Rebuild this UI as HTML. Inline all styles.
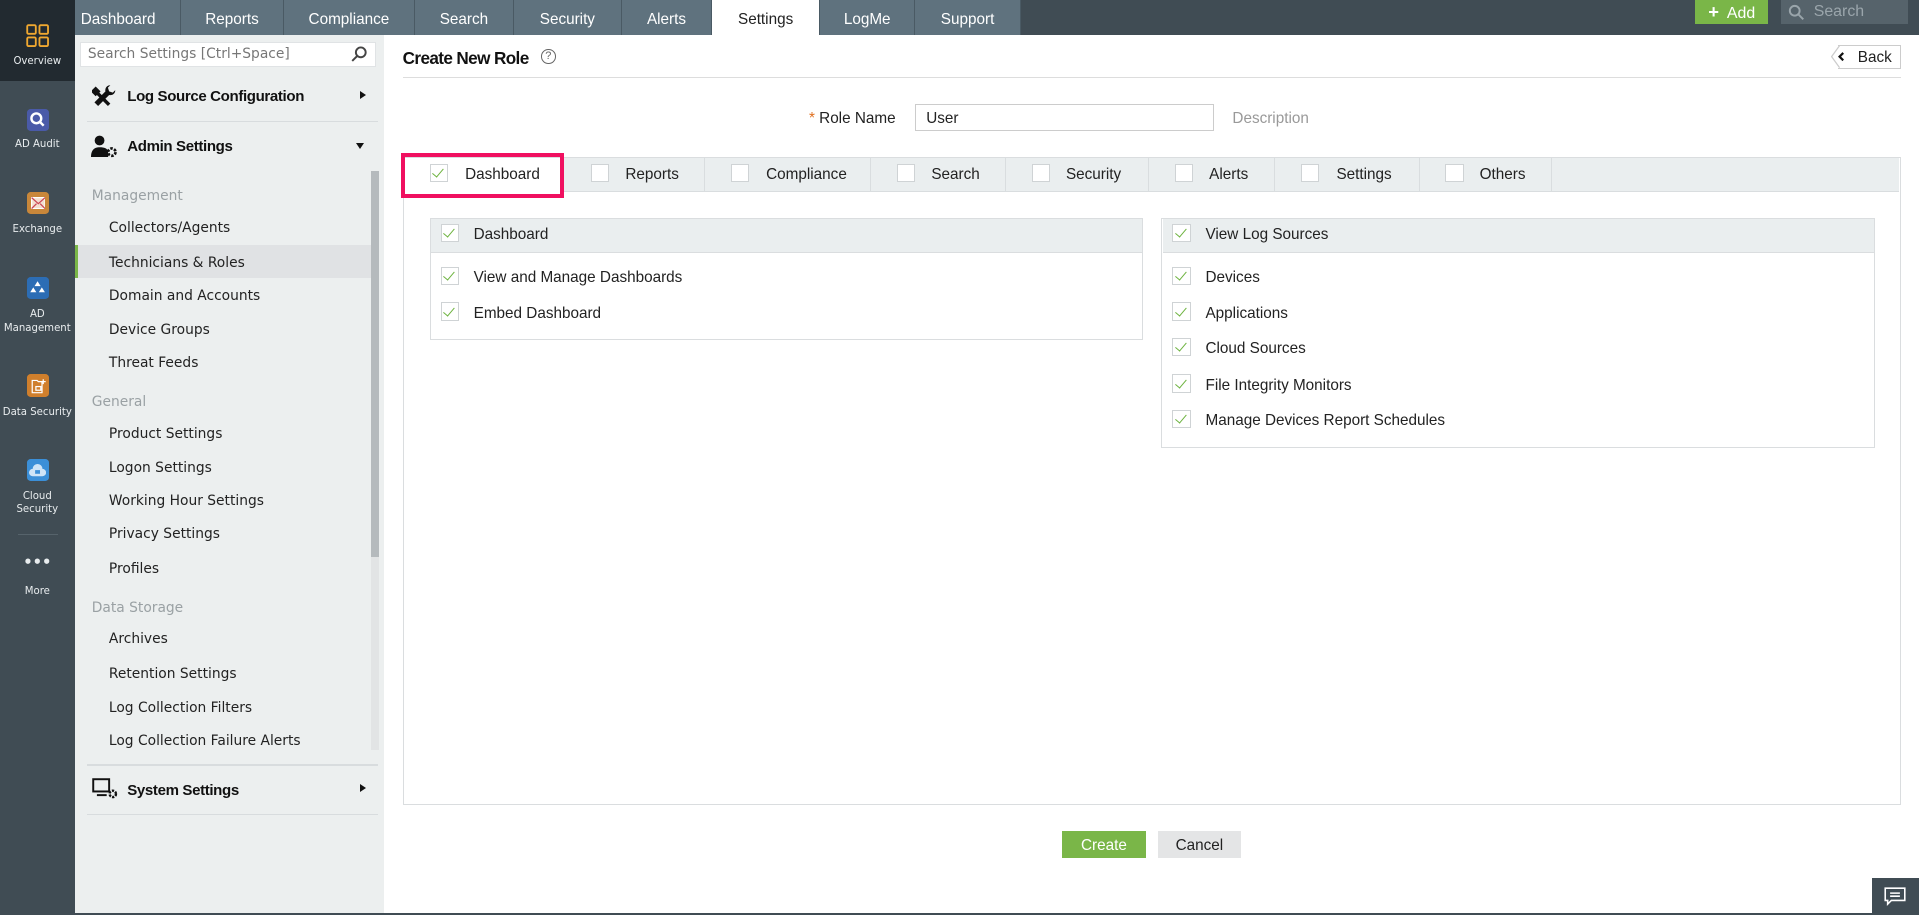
<!DOCTYPE html>
<html><head><meta charset="utf-8">
<style>
*{box-sizing:border-box;margin:0;padding:0}
html,body{width:1919px;height:916px;overflow:hidden;background:#fff}
#root{zoom:1.22385;width:1568px;height:748px;position:relative;font-family:"Liberation Sans",sans-serif;color:#222;overflow:hidden}
.abs{position:absolute}
#rail{left:0;top:0;width:61px;height:748px;background:#404c54}
#ov{left:0;top:0;width:61px;height:66px;background:#222a30}
.rl{position:absolute;width:61px;text-align:center;color:#e8ecee;font-family:"DejaVu Sans",sans-serif;font-size:8.3px;line-height:11px}
.ri{position:absolute;left:22px;width:18px;height:18px;border-radius:3px}
#top{left:61px;top:0;width:1507px;height:29px;background:#404c54}
.tab{position:absolute;top:0;height:29px;background:#5f727e;color:#fff;font-size:12.5px;line-height:32px;text-align:center;border-right:1px solid #4a5a64}
.tab.act{background:#fff;color:#222}
#side{left:61px;top:29px;width:253px;height:719px;background:#ecefef}
.si{position:absolute;left:28px;font-family:"DejaVu Sans",sans-serif;font-size:11.3px;color:#222}
.sh{position:absolute;left:14px;font-family:"DejaVu Sans",sans-serif;font-size:11.3px;color:#9aa1a4}
.sb{position:absolute;left:43px;font-size:12.3px;font-weight:bold;color:#111;letter-spacing:-0.3px}
.hl{position:absolute;left:10px;width:238px;height:1px;background:#d8dcde}
.cb{position:absolute;width:15px;height:15px;border:1px solid #cfd3d5;background:#fff}
.cb.on::after{content:"";position:absolute;left:4px;top:1px;width:4px;height:8px;border:solid #6db33f;border-width:0 1.5px 1.5px 0;transform:rotate(40deg)}
.t12{font-size:12.5px}
.ptab{position:absolute;top:129px;height:28px;border-right:1px solid #d9dddf;font-size:12.5px;line-height:28px}
</style></head><body><div id="root">

<div id="rail" class="abs"></div>
<div id="ov" class="abs"></div>
<svg class="abs" style="left:21px;top:20px" width="19" height="19" viewBox="0 0 19 19" fill="none" stroke="#f0a830" stroke-width="1.5"><rect x="1" y="1" width="7" height="7" rx="1"/><rect x="11" y="1" width="7" height="7" rx="1"/><rect x="1" y="11" width="7" height="7" rx="1"/><rect x="11" y="11" width="7" height="7" rx="1"/></svg>
<div class="rl" style="top:45px">Overview</div>
<div class="ri" style="top:89px;background:#4a5aa8"></div><svg class="abs" style="left:24px;top:91px" width="14" height="14" viewBox="0 0 14 14"><circle cx="6" cy="6" r="4" fill="none" stroke="#fff" stroke-width="2"/><path d="M9 9l3 3" stroke="#fff" stroke-width="2"/></svg>
<div class="rl" style="top:113px">AD Audit</div>
<div class="ri" style="top:157px;background:#c9873a"></div><svg class="abs" style="left:25px;top:161px" width="12" height="10" viewBox="0 0 12 10"><rect x="0.5" y="0.5" width="11" height="9" fill="#f3e0d0" stroke="#fff"/><path d="M0.5 0.5l5.5 5 5.5-5M0.5 9.5l4-4M11.5 9.5l-4-4" stroke="#c45" fill="none"/></svg>
<div class="rl" style="top:182px">Exchange</div>
<div class="ri" style="top:226px;background:#2c6db5"></div><svg class="abs" style="left:24px;top:229px" width="14" height="12" viewBox="0 0 14 12" fill="#fff"><path d="M7 1l2.5 4h-5zM3.5 6l2.5 4H1zM10.5 6l2.5 4H8z"/></svg>
<div class="rl" style="top:252px">AD<br>Management</div>
<div class="ri" style="top:306px;background:#d07f2c"></div><svg class="abs" style="left:25px;top:309px" width="13" height="13" viewBox="0 0 13 13" fill="none" stroke="#fff" stroke-width="1"><path d="M1 2h4l1 1h3v9H1z"/><rect x="4" y="7" width="4" height="3"/><path d="M10 1v4M8 3h4"/></svg>
<div class="rl" style="top:332px">Data Security</div>
<div class="ri" style="top:375px;background:#3b8fd8"></div><svg class="abs" style="left:24px;top:379px" width="14" height="11" viewBox="0 0 14 11"><path d="M3 10a3 3 0 010-6 4 4 0 018 0 3 3 0 010 6z" fill="#cfe4f7"/><rect x="5" y="5" width="4" height="3" fill="#3b8fd8"/></svg>
<div class="rl" style="top:400px">Cloud<br>Security</div>
<div class="abs" style="left:15px;top:436px;width:32px;height:1px;background:#56636b"></div>
<div class="rl" style="top:454px;font-size:12px;font-weight:bold">•••</div>
<div class="rl" style="top:478px">More</div>

<div id="top" class="abs"></div>
<div class="tab" style="left:61px;width:87px;text-align:left;padding-left:5px">Dashboard</div>
<div class="tab" style="left:148px;width:84px">Reports</div>
<div class="tab" style="left:232px;width:107px">Compliance</div>
<div class="tab" style="left:339px;width:81px">Search</div>
<div class="tab" style="left:420px;width:88px">Security</div>
<div class="tab" style="left:508px;width:74px">Alerts</div>
<div class="tab act" style="left:582px;width:88px">Settings</div>
<div class="tab" style="left:670px;width:78px">LogMe</div>
<div class="tab" style="left:748px;width:86px">Support</div>
<div class="abs" style="left:1385px;top:0;width:60px;height:20px;background:#7ab648;color:#fff;font-size:13px;line-height:20px;text-align:center"><b style="font-size:15px">+</b>&nbsp; Add</div>
<div class="abs" style="left:1455px;top:0;width:104px;height:20px;background:#56636b;color:#9aa5ab;font-size:13px;line-height:19px;padding-left:27px">Search</div>
<svg class="abs" style="left:1461px;top:3px" width="14" height="14" viewBox="0 0 14 14" fill="none" stroke="#9aa5ab" stroke-width="1.6"><circle cx="5.5" cy="5.5" r="4"/><path d="M8.5 8.5l4 4"/></svg>

<div id="side" class="abs">
 <div class="abs" style="left:4px;top:5px;width:242px;height:21px;background:#fff;border:1px solid #e0e3e5;font-family:'DejaVu Sans',sans-serif;font-size:11.3px;color:#777;padding:3px 6px">Search Settings [Ctrl+Space]</div>
 <svg class="abs" style="left:226px;top:8px" width="14" height="14" viewBox="0 0 14 14" fill="none" stroke="#444" stroke-width="1.6"><circle cx="8" cy="6" r="4"/><path d="M5 9l-4 4"/></svg>
 <svg class="abs" style="left:14px;top:40px" width="20" height="20" viewBox="0 0 20 20" fill="#111"><path d="M3 2l4 4-1 1 9 9-2 2-9-9-1 1-4-4z"/><path d="M15 1a4 4 0 00-4 5L2 15l3 3 9-9a4 4 0 005-4l-2 2-3-1-1-3z"/></svg>
 <div class="sb" style="top:43px">Log Source Configuration</div>
 <div class="abs" style="left:233px;top:45px;border-left:5px solid #111;border-top:4px solid transparent;border-bottom:4px solid transparent"></div>
 <div class="hl" style="top:70px"></div>
 <svg class="abs" style="left:13px;top:81px" width="22" height="19" viewBox="0 0 22 19" fill="#111"><circle cx="7" cy="4.5" r="4"/><path d="M0 18c0-6 3-8 7-8s6 1 7 3v5z"/><circle cx="17" cy="14" r="3" fill="none" stroke="#111" stroke-width="2.2" stroke-dasharray="2 1.2"/></svg>
 <div class="sb" style="top:84px">Admin Settings</div>
 <div class="abs" style="left:230px;top:88px;border-top:5px solid #111;border-left:4px solid transparent;border-right:4px solid transparent"></div>
 <div class="abs" style="left:242px;top:111px;width:7px;height:315px;background:#b5babd"></div>
 <div class="abs" style="left:242px;top:426px;width:7px;height:158px;background:#e2e4e5"></div>
 <div class="sh" style="top:125px">Management</div>
 <div class="si" style="top:151px">Collectors/Agents</div>
 <div class="abs" style="left:0;top:171px;width:242px;height:27px;background:#e0e2e4;border-left:3px solid #7ab648"></div>
 <div class="si" style="top:179px">Technicians &amp; Roles</div>
 <div class="si" style="top:206px">Domain and Accounts</div>
 <div class="si" style="top:234px">Device Groups</div>
 <div class="si" style="top:261px">Threat Feeds</div>
 <div class="sh" style="top:293px">General</div>
 <div class="si" style="top:319px">Product Settings</div>
 <div class="si" style="top:347px">Logon Settings</div>
 <div class="si" style="top:374px">Working Hour Settings</div>
 <div class="si" style="top:401px">Privacy Settings</div>
 <div class="si" style="top:429px">Profiles</div>
 <div class="sh" style="top:461px">Data Storage</div>
 <div class="si" style="top:487px">Archives</div>
 <div class="si" style="top:515px">Retention Settings</div>
 <div class="si" style="top:543px">Log Collection Filters</div>
 <div class="si" style="top:570px">Log Collection Failure Alerts</div>
 <div class="hl" style="top:595px;height:2px"></div>
 <svg class="abs" style="left:14px;top:607px" width="22" height="18" viewBox="0 0 22 18" fill="none" stroke="#111" stroke-width="1.6"><rect x="1" y="1" width="13" height="10"/><path d="M4 14h8"/><circle cx="17" cy="13" r="2.6" stroke-width="2" stroke-dasharray="1.8 1"/></svg>
 <div class="sb" style="top:610px">System Settings</div>
 <div class="abs" style="left:233px;top:612px;border-left:5px solid #111;border-top:4px solid transparent;border-bottom:4px solid transparent"></div>
 <div class="hl" style="top:636px"></div>
</div>

<div class="abs" style="left:329px;top:39px;font-size:14px;font-weight:bold;color:#111;letter-spacing:-.5px">Create New Role</div>
<div class="abs" style="left:442px;top:40px;width:12px;height:12px;border:1px solid #666;border-radius:50%;font-size:9px;line-height:10px;text-align:center;color:#666">?</div>
<div class="abs" style="left:329px;top:63px;width:1224px;height:1px;background:#ddd"></div>
<div class="abs" style="left:1502px;top:37px;width:51px;height:19px;border:1px solid #ccc;border-left:none;font-size:12.5px;line-height:20px;padding-left:16px">Back</div>
<svg class="abs" style="left:1496px;top:37px" width="12" height="19" viewBox="0 0 12 19"><path d="M7 0.5L0.5 9.5 7 18.5" fill="#fff" stroke="#ccc"/><path d="M10 6.5l-3 3 3 3" fill="none" stroke="#111" stroke-width="1.8"/></svg>

<div class="abs t12" style="left:661px;top:90px"><span style="color:#e07020">*</span> Role Name</div>
<div class="abs t12" style="left:748px;top:85px;width:244px;height:22px;border:1px solid #ccc;padding:4px 8px">User</div>
<div class="abs t12" style="left:1007px;top:90px;color:#999">Description</div>

<div class="abs" style="left:329px;top:128px;width:1224px;height:530px;border:1px solid #dadddf"></div>
<div class="abs" style="left:330px;top:129px;width:1222px;height:28px;background:#eaeeef;border-bottom:1px solid #d9dddf"></div>
<div class="ptab" style="left:329px;width:131px;background:#fff"></div>
<div class="cb on" style="left:351px;top:134px"></div><div class="abs t12" style="left:380px;top:136px">Dashboard</div>
<div class="abs" style="left:328px;top:125px;width:133px;height:37px;border:4px solid #f01060"></div>
<div class="ptab" style="left:460px;width:116px"></div><div class="cb" style="left:483px;top:134px"></div><div class="abs t12" style="left:511px;top:136px">Reports</div>
<div class="ptab" style="left:576px;width:136px"></div><div class="cb" style="left:597px;top:134px"></div><div class="abs t12" style="left:626px;top:136px">Compliance</div>
<div class="ptab" style="left:712px;width:110px"></div><div class="cb" style="left:733px;top:134px"></div><div class="abs t12" style="left:761px;top:136px">Search</div>
<div class="ptab" style="left:822px;width:117px"></div><div class="cb" style="left:843px;top:134px"></div><div class="abs t12" style="left:871px;top:136px">Security</div>
<div class="ptab" style="left:939px;width:103px"></div><div class="cb" style="left:960px;top:134px"></div><div class="abs t12" style="left:988px;top:136px">Alerts</div>
<div class="ptab" style="left:1042px;width:118px"></div><div class="cb" style="left:1063px;top:134px"></div><div class="abs t12" style="left:1092px;top:136px">Settings</div>
<div class="ptab" style="left:1160px;width:108px"></div><div class="cb" style="left:1181px;top:134px"></div><div class="abs t12" style="left:1209px;top:136px">Others</div>

<div class="abs" style="left:351px;top:178px;width:583px;height:100px;border:1px solid #dadddf"></div>
<div class="abs" style="left:352px;top:179px;width:581px;height:28px;background:#eaeeef;border-bottom:1px solid #dadddf"></div>
<div class="cb on" style="left:360px;top:183px"></div><div class="abs t12" style="left:387px;top:185px">Dashboard</div>
<div class="cb on" style="left:360px;top:218px"></div><div class="abs t12" style="left:387px;top:220px">View and Manage Dashboards</div>
<div class="cb on" style="left:360px;top:247px"></div><div class="abs t12" style="left:387px;top:249px">Embed Dashboard</div>

<div class="abs" style="left:949px;top:178px;width:583px;height:188px;border:1px solid #dadddf"></div>
<div class="abs" style="left:950px;top:179px;width:581px;height:28px;background:#eaeeef;border-bottom:1px solid #dadddf"></div>
<div class="cb on" style="left:958px;top:183px"></div><div class="abs t12" style="left:985px;top:185px">View Log Sources</div>
<div class="cb on" style="left:958px;top:218px"></div><div class="abs t12" style="left:985px;top:220px">Devices</div>
<div class="cb on" style="left:958px;top:247px"></div><div class="abs t12" style="left:985px;top:249px">Applications</div>
<div class="cb on" style="left:958px;top:276px"></div><div class="abs t12" style="left:985px;top:278px">Cloud Sources</div>
<div class="cb on" style="left:958px;top:306px"></div><div class="abs t12" style="left:985px;top:308px">File Integrity Monitors</div>
<div class="cb on" style="left:958px;top:335px"></div><div class="abs t12" style="left:985px;top:337px">Manage Devices Report Schedules</div>

<div class="abs t12" style="left:868px;top:679px;width:68px;height:22px;background:#7ab648;color:#fff;text-align:center;line-height:24px">Create</div>
<div class="abs t12" style="left:946px;top:679px;width:68px;height:22px;background:#e4e5e6;text-align:center;line-height:24px">Cancel</div>

<div class="abs" style="left:1530px;top:717px;width:38px;height:31px;background:#404c54"></div>
<svg class="abs" style="left:1539px;top:725px" width="18" height="16" viewBox="0 0 18 16" fill="none" stroke="#fff" stroke-width="1.3"><path d="M1 1h16v10H6l-3 3v-3H1z"/><path d="M5 5h8M5 7.5h8"/></svg>
<div class="abs" style="left:0;top:746px;width:1568px;height:2px;background:#404c54"></div>
</div></body></html>
